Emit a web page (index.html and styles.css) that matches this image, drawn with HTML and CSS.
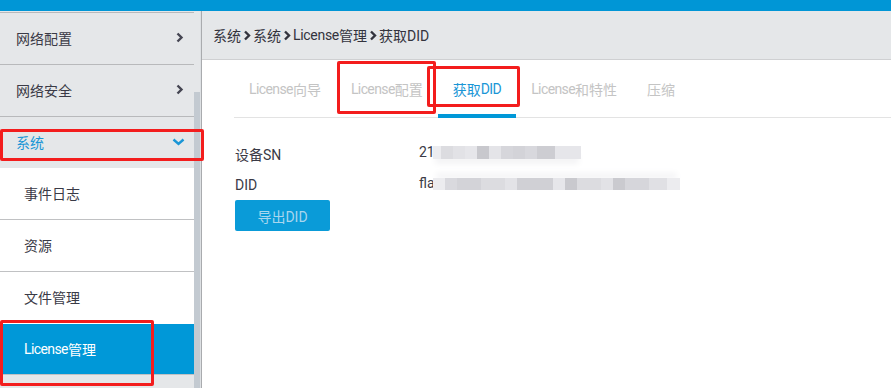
FILE: index.html
```html
<html>
<head>
    <meta charset="utf-8">
    <link rel="stylesheet" href="styles.css">
</head>
<body>
<div class="topbar"></div>
<div class="main">
    <div class="sidebar">
        <div class="nav">
            <div class="item">网络配置
                <svg class="arrow" width="8" height="11" viewBox="0 0 8 11"><path d="M1.5 1.5 L5.5 5.5 L1.5 9.5" fill="none" stroke="#454552" stroke-width="2.4"/></svg>
            </div>
            <div class="item">网络安全
                <svg class="arrow" width="8" height="11" viewBox="0 0 8 11"><path d="M1.5 1.5 L5.5 5.5 L1.5 9.5" fill="none" stroke="#454552" stroke-width="2.4"/></svg>
            </div>
            <div class="item open">系统
                <svg class="arrow down" width="13" height="8" viewBox="0 0 13 8"><path d="M1.5 1.5 L6.5 6 L11.5 1.5" fill="none" stroke="#1a96d6" stroke-width="2.4"/></svg>
            </div>
            <div class="sub">事件日志</div>
            <div class="sub">资源</div>
            <div class="sub">文件管理</div>
            <div class="sub active"><span class="en">License</span>管理</div>
        </div>
        <div class="scrollbar"><div class="thumb"></div></div>
    </div>

    <div class="content">
        <div class="crumbs">
            系统<svg class="sep" width="9" height="11" viewBox="0 0 9 11"><path d="M2 1.5 L6 5.5 L2 9.5" fill="none" stroke="#33333d" stroke-width="2.4"/></svg>系统<svg class="sep" width="9" height="11" viewBox="0 0 9 11"><path d="M2 1.5 L6 5.5 L2 9.5" fill="none" stroke="#33333d" stroke-width="2.4"/></svg><span class="en">License</span>管理<svg class="sep" width="9" height="11" viewBox="0 0 9 11"><path d="M2 1.5 L6 5.5 L2 9.5" fill="none" stroke="#33333d" stroke-width="2.4"/></svg>获取DID
        </div>

        <div class="panel">
            <div class="tabs">
                <a class="tab"><span class="en">License</span>向导</a>
                <a class="tab"><span class="en">License</span>配置</a>
                <a class="tab active">获取<span class="en">DID</span></a>
                <a class="tab"><span class="en">License</span>和特性</a>
                <a class="tab">压缩</a>
            </div>

            <div class="form">
                <div class="row">
                    <span class="label">设备SN</span>
                    <span class="value">21<span class="blur blur-sn"></span></span>
                </div>
                <div class="row">
                    <span class="label">DID</span>
                    <span class="value">fla<span class="blur blur-did"></span></span>
                </div>
                <button class="btn">导出DID</button>
            </div>
        </div>
    </div>
</div>

<div class="mark mark-system"></div>
<div class="mark mark-license"></div>
<div class="mark mark-config"></div>
<div class="mark mark-did"></div>
</body>
</html>
```

FILE: styles.css
```css
body{
    margin: 0;
    width: 891px;
    height: 388px;
    overflow: hidden;
    position: relative;
    background-color: #fff;
    color: #3a3a46;
    font-family: Roboto, "Noto Sans CJK SC", sans-serif;
    font-size: 14px;
}

.en{
    letter-spacing: -0.6px;
}

.topbar{
    height: 11px;
    background-color: #0096d6;
}

.main{
    display: flex;
    height: 377px;
}

/* left menu */

.sidebar{
    display: flex;
    width: 201px;
    border-right: 1px solid #a9abae;
    background-color: #e5e7e9;
}

.nav{
    width: 194px;
    border-top: 1px solid #e5e7e9;
    box-sizing: border-box;
}

.nav > div:first-child{
    border-top: 1px solid #b8b9bb;
}

.item{
    display: flex;
    align-items: center;
    justify-content: space-between;
    height: 49px;
    padding: 0 10px 2px 16px;
    border-bottom: 1px solid #b8b9bb;
}

.item.open{
    height: 49px;
    border-bottom: none;
    color: #1a96d6;
    padding-right: 9px;
    padding-bottom: 2px;
}

.sub{
    display: flex;
    align-items: center;
    height: 50px;
    padding-left: 24px;
    padding-bottom: 1px;
    background-color: #fff;
    border-bottom: 1px solid #c0c1c3;
}

.sub.active{
    background-color: #0098d8;
    color: #fff;
    border-top: 1px solid #fff;
    height: 49px;
    margin-top: -1px;
}

.scrollbar{
    width: 6px;
    padding-top: 81px;
    border-right: 1px solid #dde0e3;
}

.thumb{
    height: 100%;
    background-color: #c3cad1;
}

/* right side */

.content{
    flex: 1;
}

.crumbs{
    display: flex;
    align-items: center;
    height: 48px;
    padding-left: 11px;
    background-color: #e5e7e9;
    border-bottom: 1px solid #cfd0d2;
    color: #33333d;
}

.crumbs .en{
    letter-spacing: -0.3px;
}

.sep{
    margin: 0 1px 0 2px;
}

.panel{
    padding-left: 32px;
}

.tabs{
    display: flex;
    height: 57px;
    border-bottom: 1px solid #e3e3e3;
}

.tab{
    display: flex;
    align-items: center;
    padding: 3px 15px 0 15px;
    margin-bottom: -1px;
    color: #c4c4c4;
    border-bottom: 4px solid transparent;
}

.tab.active{
    color: #1a96d6;
    border-bottom-color: #0098d8;
}

.form{
    padding-top: 20px;
    padding-left: 1px;
}

.row{
    display: flex;
    align-items: center;
    height: 32px;
}

.row:first-child{
    height: 31px;
}

.label{
    width: 184px;
}

.value{
    position: relative;
    top: -2px;
}

.blur{
    display: inline-block;
    vertical-align: middle;
}

.blur-sn{
    width: 148px;
    height: 13px;
    margin-left: -2px;
    background: linear-gradient(90deg,
        #ececef 0 8px, #dcdce0 8px 20px, #e2e2e6 20px 32px, #e6e6ea 32px 44px,
        #c8c8cd 44px 56px, #e4e4e8 56px 68px, #d6d6db 68px 80px, #d3d3d8 80px 92px,
        #d8d8dd 92px 104px, #cdcdd2 104px 122px, #e6e6ea 122px 148px);
    box-shadow: 0 7px 6px -2px #f3f3f5;
}

.blur-did{
    width: 247px;
    height: 12px;
    margin-left: -2px;
    background: linear-gradient(90deg,
        #ececef 0 12px, #d9d9de 12px 24px, #d3d3d8 24px 48px, #dcdce0 48px 72px,
        #e3e3e7 72px 84px, #d0d0d5 84px 120px, #e6e6ea 120px 132px, #c9c9ce 132px 144px,
        #dcdce0 144px 168px, #e2e2e6 168px 180px, #cacacf 180px 192px, #d6d6db 192px 216px,
        #e0e0e4 216px 234px, #ececef 234px 247px);
    box-shadow: 0 -8px 6px -3px #f3f3f5;
}

.btn{
    display: block;
    width: 95px;
    height: 31px;
    margin-top: -1px;
    border: none;
    border-radius: 2px;
    background-color: #0a9bd8;
    color: #a8d6ee;
    font-family: Roboto, "Noto Sans CJK SC", sans-serif;
    font-size: 14px;
}

/* red annotation boxes drawn over the shot */

.mark{
    position: absolute;
    border: 3px solid #f31d1d;
    border-radius: 2px;
    box-sizing: border-box;
}

.mark-system{
    left: 0;
    top: 129px;
    width: 204px;
    height: 32px;
}

.mark-license{
    left: 0;
    top: 320px;
    width: 154px;
    height: 66px;
}

.mark-config{
    left: 337px;
    top: 61px;
    width: 99px;
    height: 53px;
}

.mark-did{
    left: 427px;
    top: 66px;
    width: 93px;
    height: 41px;
}
```
